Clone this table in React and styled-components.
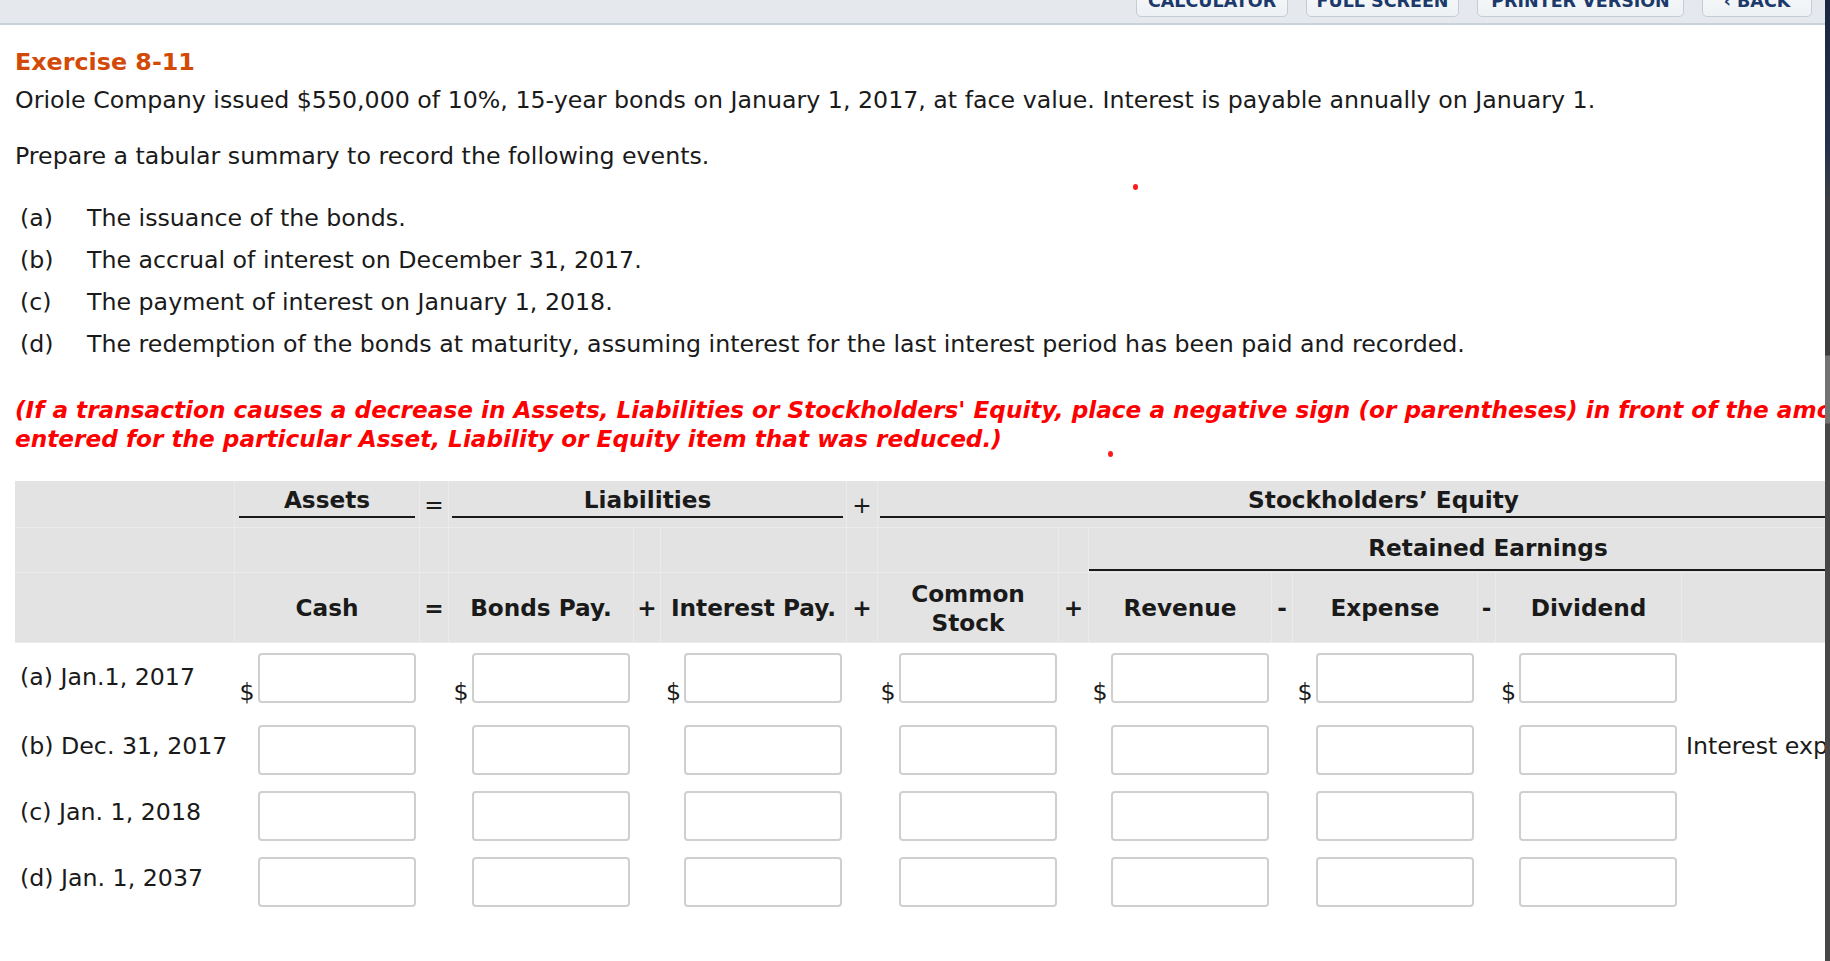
import React from 'react';
import styled, { createGlobalStyle } from 'styled-components';

const GlobalStyle = createGlobalStyle`
  html, body { margin: 0; padding: 0; background: #fff; overflow: hidden; }
  body {
    font-family: "DejaVu Sans", Verdana, sans-serif;
    font-size: 23.7px;
    color: #1a1a1a;
  }
  * { box-sizing: border-box; }
`;

const COLS =
  '220px 185px 29px 185px 27px 186px 31px 181px 30px 183px 21px 185px 18px 186px 206px';

const BOLD_SIZE = '23.2px';

const Page = styled.div`
  display: flex;
  width: 1830px;
  height: 961px;
  overflow: hidden;
`;

const Viewport = styled.div`
  position: relative;
  flex: 0 0 1825px;
  width: 1825px;
  height: 961px;
  overflow: hidden;
`;

const ScrollTrack = styled.div`
  flex: 0 0 5px;
  height: 961px;
  background: linear-gradient(
    to bottom,
    #1b2640 0px,
    #26324d 150px,
    #3b3d42 200px,
    #3d3d3d 355px,
    #727272 356px,
    #727272 423px,
    #474747 424px,
    #474747 100%
  );
`;

const TopBar = styled.div`
  height: 25px;
  background: #e5e9ee;
  border-bottom: 2px solid #c9d1d9;
  display: flex;
  justify-content: flex-end;
  align-items: flex-end;
  gap: 18px;
  padding-right: 13px;
`;

const ToolButton = styled.div`
  flex: 0 0 ${(p) => p.$w}px;
  height: 40px;
  margin-bottom: 6px;
  border: 1px solid #c4cdd7;
  border-radius: 5px;
  background: linear-gradient(#fbfcfd, #eef1f4);
  display: flex;
  align-items: flex-end;
  justify-content: center;
  padding-bottom: 5px;
  font-weight: 700;
  font-size: 17.5px;
  line-height: 20px;
  color: #1b3a6b;
  white-space: nowrap;
`;

const Content = styled.div`
  width: 1890px;
  padding-left: 15px;
`;

const Title = styled.h1`
  margin: 23px 0 0;
  font-size: 23.8px;
  line-height: 28px;
  font-weight: 700;
  color: #d24a06;
`;

const Para = styled.p`
  margin: ${(p) => p.$mt}px 0 0;
  line-height: 28px;
  white-space: nowrap;
`;

const EventList = styled.ul`
  list-style: none;
  margin: 27px 0 0;
  padding: 0 0 0 5px;
`;

const EventItem = styled.li`
  display: flex;
  line-height: 42px;
  white-space: nowrap;
`;

const EventTag = styled.span`
  flex: 0 0 67px;
`;

const Notice = styled.p`
  margin: 30px 0 0;
  line-height: 29px;
  color: #ff0000;
  font-size: ${BOLD_SIZE};
  font-weight: 700;
  font-style: italic;
  white-space: nowrap;
`;

const Table = styled.div`
  margin-top: 28px;
  width: 1873px;
`;

const HeadRow = styled.div`
  display: grid;
  grid-template-columns: ${COLS};
  height: ${(p) => p.$h}px;
  background: #e3e3e3;
`;

const HeadCell = styled.div`
  grid-column: ${(p) => p.$span || 'auto'};
  border-right: 1px solid #ebebeb;
  border-bottom: 1px solid #ebebeb;
  display: flex;
  flex-direction: column;
  align-items: center;
  justify-content: center;
  text-align: center;
  font-size: ${BOLD_SIZE};
  font-weight: ${(p) => (p.$light ? 400 : 700)};
  line-height: 29px;
  white-space: nowrap;
`;

const GroupCell = styled.div`
  grid-column: ${(p) => p.$span};
  border-right: 1px solid #ebebeb;
  border-bottom: 1px solid #ebebeb;
  display: flex;
  flex-direction: column;
  justify-content: ${(p) => (p.$bottom ? 'flex-end' : 'flex-start')};
  padding: ${(p) => p.$pad};
`;

const GroupCaption = styled.div`
  border-bottom: 2px solid #1a1a1a;
  text-align: center;
  font-size: ${BOLD_SIZE};
  font-weight: 700;
  line-height: ${(p) => p.$lh}px;
  padding-bottom: ${(p) => p.$pb}px;
  white-space: nowrap;
`;

const DataRow = styled.div`
  display: grid;
  grid-template-columns: ${COLS};
  padding-top: ${(p) => p.$pt}px;
`;

const LabelCell = styled.div`
  display: flex;
  align-items: center;
  padding-left: 5px;
  padding-bottom: ${(p) => p.$lift * 2}px;
  white-space: nowrap;
`;

const EntryCell = styled.div`
  display: flex;
  align-items: flex-end;
  justify-content: center;
  gap: 3px;
`;

const Dollar = styled.span`
  flex: 0 0 14px;
  line-height: 22px;
  visibility: ${(p) => (p.$show ? 'visible' : 'hidden')};
`;

const AmountBox = styled.input`
  width: 158px;
  height: 50px;
  margin: 0;
  padding: 0 6px;
  border: 2px solid #cfcfcf;
  border-radius: 4px;
  background: #fff;
  font: inherit;
  outline: none;
`;

const NoteCell = styled.div`
  display: flex;
  align-items: center;
  padding-left: 4px;
  padding-bottom: ${(p) => p.$lift * 2}px;
  white-space: nowrap;
`;

const Marker = styled.span`
  position: absolute;
  left: ${(p) => p.$x}px;
  top: ${(p) => p.$y}px;
  width: 5px;
  height: 6px;
  border-radius: 50%;
  background: #ff1a1a;
`;

const events = [
  ['(a)', 'The issuance of the bonds.'],
  ['(b)', 'The accrual of interest on December 31, 2017.'],
  ['(c)', 'The payment of interest on January 1, 2018.'],
  [
    '(d)',
    'The redemption of the bonds at maturity, assuming interest for the last interest period has been paid and recorded.',
  ],
];

const rows = [
  { label: '(a) Jan.1, 2017', pt: 10, lift: 1, dollar: true },
  { label: '(b) Dec. 31, 2017', pt: 22, lift: 4, note: 'Interest expense' },
  { label: '(c) Jan. 1, 2018', pt: 16, lift: 4 },
  { label: '(d) Jan. 1, 2037', pt: 16, lift: 4 },
];

const ENTRY_COLS = [2, 4, 6, 8, 10, 12, 14];

function Entry({ dollar }) {
  return (
    <EntryCell>
      <Dollar $show={dollar}>$</Dollar>
      <AmountBox type="text" />
    </EntryCell>
  );
}

function Row({ row }) {
  const cells = [];
  for (let c = 1; c <= 15; c++) {
    if (c === 1)
      cells.push(
        <LabelCell key={c} $lift={row.lift}>
          {row.label}
        </LabelCell>
      );
    else if (ENTRY_COLS.includes(c)) cells.push(<Entry key={c} dollar={row.dollar} />);
    else if (c === 15)
      cells.push(
        <NoteCell key={c} $lift={row.lift}>
          {row.note || ''}
        </NoteCell>
      );
    else cells.push(<div key={c} />);
  }
  return <DataRow $pt={row.pt}>{cells}</DataRow>;
}

export default function App() {
  return (
    <>
      <GlobalStyle />
      <Page>
        <Viewport>
          <TopBar>
            <ToolButton $w={152}>CALCULATOR</ToolButton>
            <ToolButton $w={153}>FULL SCREEN</ToolButton>
            <ToolButton $w={207}>PRINTER VERSION</ToolButton>
            <ToolButton $w={110}>‹ BACK</ToolButton>
          </TopBar>
          <Content>
            <Title>Exercise 8-11</Title>
            <Para $mt={10}>
              Oriole Company issued $550,000 of 10%, 15-year bonds on January 1, 2017, at face
              value. Interest is payable annually on January 1.
            </Para>
            <Para $mt={28}>Prepare a tabular summary to record the following events.</Para>
            <EventList>
              {events.map(([tag, text]) => (
                <EventItem key={tag}>
                  <EventTag>{tag}</EventTag>
                  <span>{text}</span>
                </EventItem>
              ))}
            </EventList>
            <Notice>
              (If a transaction causes a decrease in Assets, Liabilities or Stockholders' Equity,
              place a negative sign (or parentheses) in front of the amount
              <br />
              entered for the particular Asset, Liability or Equity item that was reduced.)
            </Notice>
            <Table>
              <HeadRow $h={47}>
                <HeadCell />
                <GroupCell $span="2 / 3" $pad="6px 4px 0">
                  <GroupCaption $lh={26} $pb={3}>Assets</GroupCaption>
                </GroupCell>
                <HeadCell $light>=</HeadCell>
                <GroupCell $span="4 / 7" $pad="6px 3px 0">
                  <GroupCaption $lh={26} $pb={3}>Liabilities</GroupCaption>
                </GroupCell>
                <HeadCell $light>+</HeadCell>
                <GroupCell $span="8 / 16" $pad="6px 0 0 2px">
                  <GroupCaption $lh={26} $pb={3}>Stockholders’ Equity</GroupCaption>
                </GroupCell>
              </HeadRow>
              <HeadRow $h={45}>
                {[1, 2, 3, 4, 5, 6, 7, 8, 9].map((c) => (
                  <HeadCell key={c} />
                ))}
                <GroupCell $span="10 / 16" $pad="0 0 1px" $bottom>
                  <GroupCaption $lh={28} $pb={7}>Retained Earnings</GroupCaption>
                </GroupCell>
              </HeadRow>
              <HeadRow $h={70}>
                <HeadCell />
                <HeadCell>Cash</HeadCell>
                <HeadCell>=</HeadCell>
                <HeadCell>Bonds Pay.</HeadCell>
                <HeadCell>+</HeadCell>
                <HeadCell>Interest Pay.</HeadCell>
                <HeadCell>+</HeadCell>
                <HeadCell>
                  <span>Common</span>
                  <span>Stock</span>
                </HeadCell>
                <HeadCell>+</HeadCell>
                <HeadCell>Revenue</HeadCell>
                <HeadCell>-</HeadCell>
                <HeadCell>Expense</HeadCell>
                <HeadCell>-</HeadCell>
                <HeadCell>Dividend</HeadCell>
                <HeadCell />
              </HeadRow>
              {rows.map((r) => (
                <Row key={r.label} row={r} />
              ))}
            </Table>
          </Content>
          <Marker $x={1133} $y={184} />
          <Marker $x={1108} $y={451} />
        </Viewport>
        <ScrollTrack />
      </Page>
    </>
  );
}
